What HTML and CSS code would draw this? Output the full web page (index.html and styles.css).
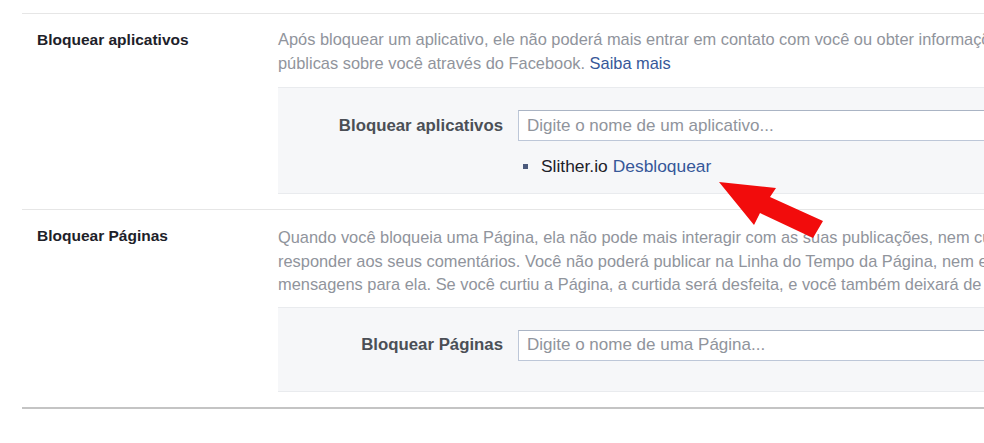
FILE: index.html
```html
<!doctype html>
<html lang="pt-BR">
<head>
<meta charset="utf-8">
<title>Bloquear</title>
<link rel="stylesheet" href="styles.css">
</head>
<body>

<div class="page">
  <div class="section">
    <div class="title">Bloquear aplicativos</div>
    <div class="content">
      <p class="desc">Após bloquear um aplicativo, ele não poderá mais entrar em contato com você ou obter informações não<br>
        públicas sobre você através do Facebook. <a href="#">Saiba mais</a></p>
      <div class="box">
        <div class="field">
          <label>Bloquear aplicativos</label>
          <input type="text" placeholder="Digite o nome de um aplicativo...">
        </div>
        <ul class="blocked">
          <li>Slither.io <a href="#">Desbloquear</a></li>
        </ul>
      </div>
    </div>
  </div>

  <div class="section second">
    <div class="title">Bloquear Páginas</div>
    <div class="content">
      <p class="desc">Quando você bloqueia uma Página, ela não pode mais interagir com as suas publicações, nem curtir ou<br>
        responder aos seus comentários. Você não poderá publicar na Linha do Tempo da Página, nem enviar<br>
        mensagens para ela. Se você curtiu a Página, a curtida será desfeita, e você também deixará de segui-la.</p>
      <div class="box tall">
        <div class="field">
          <label>Bloquear Páginas</label>
          <input type="text" placeholder="Digite o nome de uma Página...">
        </div>
      </div>
    </div>
  </div>
</div>

<svg class="arrow" width="984" height="443" viewBox="0 0 984 443">
  <polygon points="719,182 776,188 770,197 823,221 813,238 760,213 754,225" fill="#f20c0c"/>
</svg>

</body>
</html>
```

FILE: styles.css
```css
body {
  margin: 0;
  background: #fff;
  overflow: hidden;
  font-family: "Liberation Sans", Arial, sans-serif;
}
.page {
  margin: 13px 0 0 22px;
  width: 1240px;
  border-bottom: 2px solid #c4c4c4;
}
.section {
  display: grid;
  grid-template-columns: 256px 1fr;
  border-top: 1px solid #e6e6e6;
  padding: 14px 0 15px;
}
.section.second .desc {
  margin-top: 2px;
  margin-bottom: -2px;
}
.title {
  padding-left: 15px;
  font-size: 15.5px;
  font-weight: bold;
  line-height: 23.5px;
  color: #1d2129;
}
.desc {
  margin: 0;
  font-size: 16.4px;
  line-height: 23.5px;
  color: #90949c;
  white-space: nowrap;
}
.desc a {
  color: #365899;
  text-decoration: none;
}
.box {
  margin-top: 12px;
  background: #f6f7f9;
  border-top: 1px solid #e9ebee;
  border-bottom: 1px solid #e9ebee;
  padding: 22px 0 17px;
}
.box.tall {
  padding-bottom: 30px;
}
.field {
  display: grid;
  grid-template-columns: 225px 1fr;
  column-gap: 15px;
  align-items: center;
}
.field label {
  text-align: right;
  font-size: 16.8px;
  font-weight: bold;
  color: #4b4f56;
}
.field input {
  height: 31px;
  box-sizing: border-box;
  border: 1px solid #bdc7d8;
  border-top-color: #aab4c4;
  background: #fff;
  padding: 0 8px;
  font: 17px "Liberation Sans", Arial, sans-serif;
  color: #1d2129;
}
.field input::placeholder {
  color: #90949c;
}
.blocked {
  margin: 15px 0 0 240px;
  padding: 0;
  list-style: none;
}
.blocked li {
  font-size: 17.4px;
  line-height: 20px;
  color: #1d2129;
  display: flex;
  align-items: center;
}
.blocked li::before {
  content: "";
  width: 5px;
  height: 5px;
  background: #4b5a7c;
  margin: 0 13px 0 5px;
}
.blocked a {
  color: #365899;
  text-decoration: none;
  margin-left: 5px;
}
.arrow {
  position: absolute;
  left: 0;
  top: 0;
  pointer-events: none;
}
```
